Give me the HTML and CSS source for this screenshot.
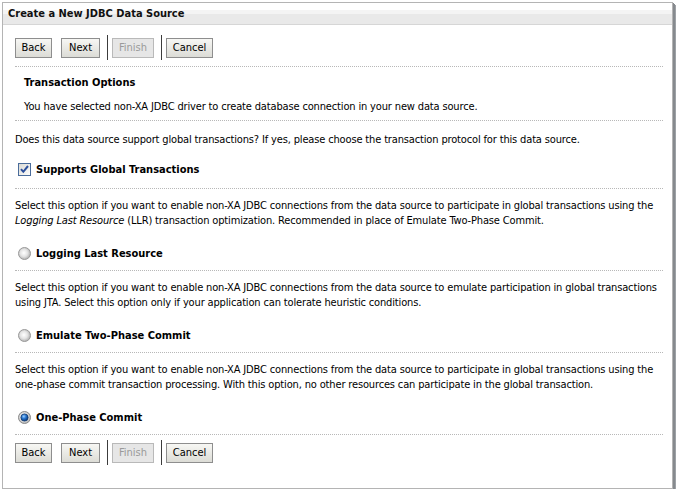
FILE: index.html
```html
<!DOCTYPE html>
<html>
<head>
<meta charset="utf-8">
<link rel="stylesheet" href="styles.css">
</head>
<body>
<div class="frame">
  <div class="titlebar"><span class="title">Create a New JDBC Data Source</span></div>
  <div class="content">
    <div class="toolbar">
      <span class="btn btn-back">Back</span>
      <span class="btn btn-next">Next</span>
      <span class="sep"></span>
      <span class="btn btn-finish disabled">Finish</span>
      <span class="sep"></span>
      <span class="btn btn-cancel">Cancel</span>
    </div>
    <div class="rule"></div>
    <div class="intro">
      <div class="heading">Transaction Options</div>
      <div class="line intro-text">You have selected non-XA JDBC driver to create database connection in your new data source.</div>
    </div>
    <div class="rule"></div>
    <div class="line question">Does this data source support global transactions? If yes, please choose the transaction protocol for this data source.</div>
    <div class="opt first">
      <svg class="ctl" width="13" height="13" viewBox="0 0 13 13">
        <defs>
          <linearGradient id="cbg" x1="0" y1="0" x2="1" y2="1">
            <stop offset="0" stop-color="#d8d8d2"/>
            <stop offset="1" stop-color="#ffffff"/>
          </linearGradient>
        </defs>
        <rect x="0.5" y="0.5" width="12" height="12" fill="url(#cbg)" stroke="#4a6c9b"/>
        <path d="M3 6.2 L5.3 8.8 L10 3" fill="none" stroke="#2b4f9c" stroke-width="2"/>
      </svg>
      <span class="opt-label">Supports Global Transactions</span>
    </div>
    <div class="rule after-opt after-first"></div>
    <div class="line desc">Select this option if you want to enable non-XA JDBC connections from the data source to participate in global transactions using the<br><i>Logging Last Resource</i> (LLR) transaction optimization. Recommended in place of Emulate Two-Phase Commit.</div>
    <div class="opt">
      <svg class="ctl" width="13" height="13" viewBox="0 0 13 13">
        <defs>
          <radialGradient id="rg1" cx="0.45" cy="0.45" r="0.6">
            <stop offset="0" stop-color="#ffffff"/>
            <stop offset="0.5" stop-color="#e4e4e4"/>
            <stop offset="1" stop-color="#a8a8a8"/>
          </radialGradient>
        </defs>
        <circle cx="6.5" cy="6.5" r="6" fill="url(#rg1)" stroke="#9a9a9a"/>
      </svg>
      <span class="opt-label">Logging Last Resource</span>
    </div>
    <div class="rule after-opt"></div>
    <div class="line desc">Select this option if you want to enable non-XA JDBC connections from the data source to emulate participation in global transactions<br>using JTA. Select this option only if your application can tolerate heuristic conditions.</div>
    <div class="opt">
      <svg class="ctl" width="13" height="13" viewBox="0 0 13 13">
        <circle cx="6.5" cy="6.5" r="6" fill="url(#rg1)" stroke="#9a9a9a"/>
      </svg>
      <span class="opt-label">Emulate Two-Phase Commit</span>
    </div>
    <div class="rule after-opt"></div>
    <div class="line desc">Select this option if you want to enable non-XA JDBC connections from the data source to participate in global transactions using the<br>one-phase commit transaction processing. With this option, no other resources can participate in the global transaction.</div>
    <div class="opt">
      <svg class="ctl" width="13" height="13" viewBox="0 0 13 13">
        <defs>
          <radialGradient id="rg2" cx="0.4" cy="0.35" r="0.6">
            <stop offset="0" stop-color="#9fd0ff"/>
            <stop offset="0.5" stop-color="#2a78d0"/>
            <stop offset="1" stop-color="#0c3f86"/>
          </radialGradient>
        </defs>
        <circle cx="6.5" cy="6.5" r="6" fill="url(#rg1)" stroke="#8a8a8a"/>
        <circle cx="6.5" cy="6.5" r="3.6" fill="url(#rg2)" stroke="#123a70" stroke-width="0.8"/>
      </svg>
      <span class="opt-label">One-Phase Commit</span>
    </div>
    <div class="rule after-opt"></div>
    <div class="toolbar bottom">
      <span class="btn btn-back">Back</span>
      <span class="btn btn-next">Next</span>
      <span class="sep"></span>
      <span class="btn btn-finish disabled">Finish</span>
      <span class="sep"></span>
      <span class="btn btn-cancel">Cancel</span>
    </div>
  </div>
</div>
</body>
</html>
```
FILE: styles.css
```css
html, body {
  margin: 0;
  padding: 0;
  background: #ffffff;
}
body {
  font-family: "DejaVu Sans Condensed", "DejaVu Sans", sans-serif;
  font-size: 11px;
  color: #000;
}
.frame {
  box-sizing: border-box;
  margin: 2px 0 0 2px;
  width: 671px;
  height: 487px;
  border: 1px solid #b4b4b4;
  box-shadow: 1px 1px 0 #868a8e, 2px 2px 0 #868a8e, 3px 3px 0 #9ea2a6;
  background: #fff;
}
.titlebar {
  height: 22px;
  box-sizing: border-box;
  border-bottom: 1px solid #d6d6d6;
  background: linear-gradient(to bottom, #ffffff 0px, #ffffff 7px, #f4f4f4 7px, #f4f4f4 11px, #e9e9e9 11px, #e9e9e9 100%);
  padding-left: 5px;
  display: flex;
  align-items: center;
}
.title {
  font-weight: bold;
  font-size: 11px;
  color: #111;
}
.content {
  padding: 0 9px 0 12px;
}
.toolbar {
  display: flex;
  align-items: center;
  height: 25px;
  margin-top: 10px;
}
.toolbar.bottom {
  margin-top: 5px;
}
.btn {
  box-sizing: border-box;
  height: 20px;
  display: inline-flex;
  align-items: center;
  justify-content: center;
  border: 1px solid #8e8e8e;
  background: linear-gradient(to bottom, #f7f7f4, #dcdcd6);
  color: #000;
}
.btn-back {
  width: 37px;
  margin-right: 9px;
}
.btn-next {
  width: 39px;
  margin-right: 7px;
}
.btn-finish {
  width: 42px;
  margin-right: 7px;
}
.btn-cancel {
  width: 47px;
}
.btn.disabled {
  color: #9a9a9a;
  border-color: #b9b9b9;
  background: #e6e6e6;
}
.sep {
  width: 1px;
  height: 25px;
  background: #3c3c3c;
  margin-right: 4px;
}
.rule {
  border-top: 1px dotted #b8b8b8;
  margin-top: 6px;
}
.rule.after-opt {
  margin-top: 7px;
}
.rule.after-first {
  margin-top: 9px;
}
.line {
  line-height: 15px;
  white-space: nowrap;
  letter-spacing: -0.15px;
}
.intro {
  padding-left: 9px;
  padding-top: 8px;
}
.heading {
  font-weight: bold;
  line-height: 15px;
}
.intro-text {
  margin-top: 9px;
  margin-bottom: 3px;
}
.question {
  margin-top: 11px;
}
.desc {
  margin-top: 9px;
}
.opt {
  display: flex;
  align-items: center;
  height: 20px;
  margin-top: 15px;
  padding-left: 3px;
}
.opt.first {
  margin-top: 12px;
}
.ctl {
  display: block;
  margin-right: 5px;
}
.opt-label {
  font-weight: bold;
}
```
